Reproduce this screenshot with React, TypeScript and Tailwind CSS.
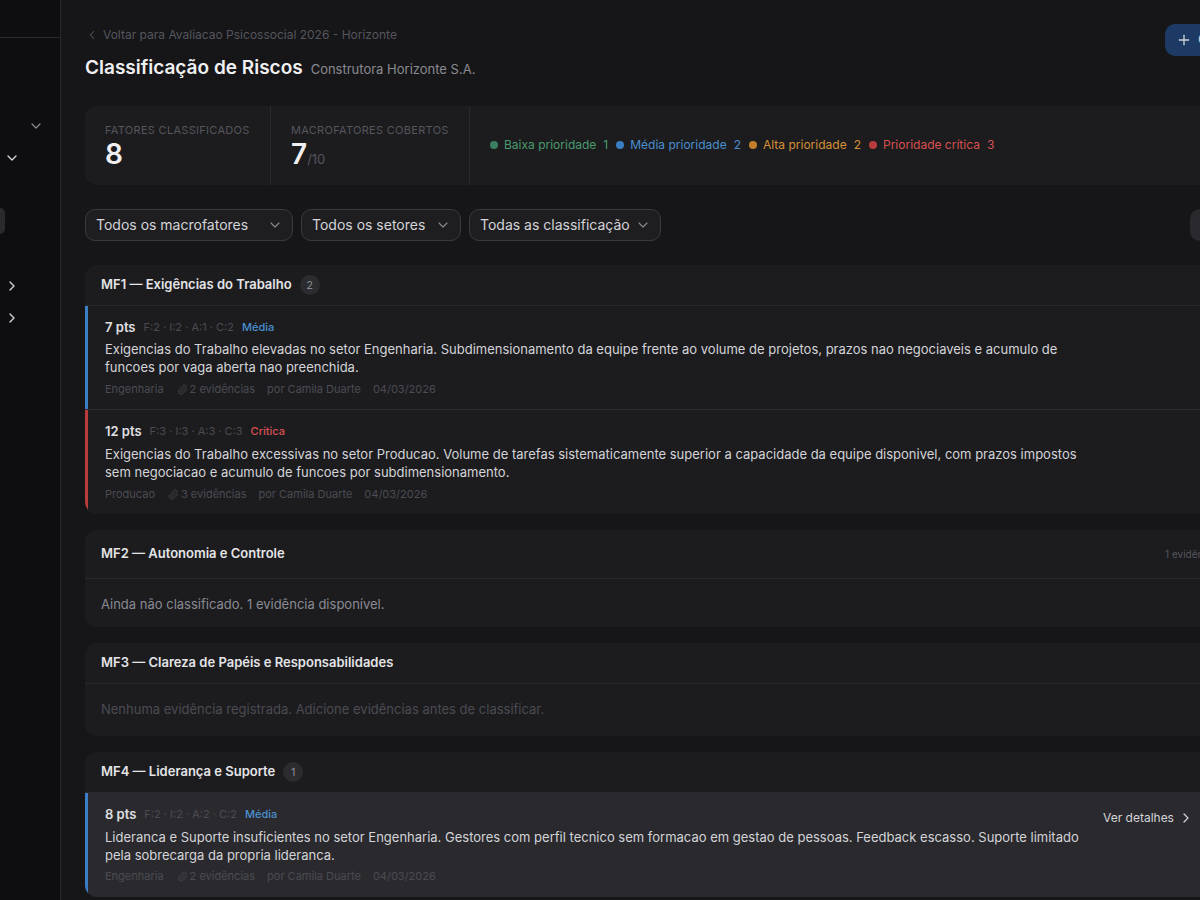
import React from "react";
import { ChevronDown, ChevronLeft, ChevronRight, Paperclip, Plus } from "lucide-react";

type Factor = {
  pts: string;
  scores: string;
  level: "Média" | "Crítica";
  lines: string;
  sector: string;
  evid: string;
  hover?: boolean;
};

const levelText = { "Média": "text-[#4a8fcf]", "Crítica": "text-[#d95050]" };
const levelBar = { "Média": "bg-[#3b7ec4]", "Crítica": "bg-[#b83c3c]" };

function FactorRow({ f, last }: { f: Factor; last?: boolean }) {
  return (
    <div className={`relative flex items-start pl-5 pr-[8px] h-[104px] ${f.hover ? "bg-[#2a2a2e]" : ""} ${last ? "rounded-b-xl overflow-hidden" : "border-b border-[#2c2c30]"}`}>
      <div className={`absolute left-0 top-0 bottom-0 w-[3px] ${levelBar[f.level]}`} />
      <div className="w-[978px] shrink-0 pt-[12px]">
        <div className="flex items-center h-[19px]">
          <span className="text-[13px] font-semibold text-[#e0e0e3] mr-2">{f.pts}</span>
          <span className="text-[11px] text-[#4b4b52] mr-2">{f.scores}</span>
          <span className={`text-[11px] font-medium ${levelText[f.level]}`}>{f.level}</span>
        </div>
        <p className={`text-[13px] leading-[18px] text-[#d4d4d8] ${last ? "mt-[4px]" : "mt-[3px]"}`}>{f.lines}</p>
        <div className={`flex items-center text-[11px] text-[#4b4b52] h-[16px] ${f.hover ? "mt-[4px]" : last ? "mt-[5px]" : "mt-[5px]"}`}>
          <span>{f.sector}</span>
          <Paperclip className="w-[11px] h-[11px] ml-[13px] mr-[2px]" strokeWidth={1.6} />
          <span>{f.evid}</span>
          <span className="ml-[12px]">por Camila Duarte</span>
          <span className="ml-[12px]">04/03/2026</span>
        </div>
      </div>
      {f.hover && (
        <div className="flex items-center ml-[20px] pt-[16px] text-[12px] text-[#d4d4d8] shrink-0">
          Ver detalhes
          <ChevronRight className="w-4 h-4 ml-[4px]" strokeWidth={1.8} />
        </div>
      )}
    </div>
  );
}

function GroupHeader({ title, count, right, tall }: { title: string; count?: string; right?: string; tall?: boolean }) {
  return (
    <div className={`flex items-center pl-4 border-b border-[#2a2a2d] ${tall ? "h-[49px]" : "h-[41px]"}`}>
      <span className="text-[13px] font-semibold text-[#e4e4e7]">{title}</span>
      {count && (
        <span className="ml-2 w-5 h-5 rounded-full bg-[#2c2c30] text-[11px] text-[#8a8a92] flex items-center justify-center">{count}</span>
      )}
      {right && <span className="ml-auto mr-[-31px] text-[10px] text-[#55555c] w-[66px]">{right}</span>}
    </div>
  );
}

function Filter({ label, width }: { label: string; width: string }) {
  return (
    <div className={`flex items-center justify-between h-8 pl-[10px] pr-[9px] rounded-[10px] border border-[#3a3a3f] bg-[#1e1e21] text-[14px] text-[#d4d4d8] ${width}`}>
      <span className="whitespace-nowrap overflow-hidden mb-[1px]">{label}</span>
      <ChevronDown className="w-4 h-4 text-[#8a8a92] shrink-0" strokeWidth={1.6} />
    </div>
  );
}

function Legend({ dot, text, label, n }: { dot: string; text: string; label: string; n: string }) {
  return (
    <div className={`flex items-center text-[12px] ${text}`}>
      <span className={`w-2 h-2 rounded-full mr-[6px] ${dot}`} />
      <span>{label}</span>
      <span className="ml-[7px]">{n}</span>
    </div>
  );
}

export default function App() {
  return (
    <div className="w-[1200px] h-[900px] flex overflow-hidden bg-[#161618]" style={{ fontFamily: "Inter, 'Noto Sans', sans-serif" }}>
      {/* sidebar, scrolled mostly out of view */}
      <aside className="w-[61px] shrink-0 h-full bg-[#0e0e10] border-r border-[#2a2a2d] flex flex-col overflow-hidden text-[#d4d4d8]">
        <div className="h-[38px] border-b border-[#2a2a2d] shrink-0" />
        <div className="flex justify-end pr-[16px] mt-[80px]">
          <ChevronDown className="w-4 h-4 text-[#8a8a92]" strokeWidth={1.8} />
        </div>
        <div className="pl-[4px] mt-[16px]">
          <ChevronDown className="w-4 h-4" strokeWidth={2} />
        </div>
        <div className="w-[5px] h-[26px] rounded-r-md bg-[#2a2a2e] mt-[42px]" />
        <div className="pl-[4px] mt-[44px]">
          <ChevronRight className="w-4 h-4" strokeWidth={2} />
        </div>
        <div className="pl-[4px] mt-[16px]">
          <ChevronRight className="w-4 h-4" strokeWidth={2} />
        </div>
      </aside>

      <main className="w-[1400px] shrink-0 pl-6 pt-[24px]">
        <div className="flex items-start h-[82px]">
          <div className="w-[1080px] shrink-0">
            <div className="flex items-center text-[12px] h-[20px] pt-[1px] text-[#55555c]">
              <ChevronLeft className="w-[14px] h-[14px] mr-[4px]" strokeWidth={1.8} />
              Voltar para Avaliacao Psicossocial 2026 - Horizonte
            </div>
            <div className="flex items-baseline mt-[10px]">
              <h1 className="text-[19px] leading-[28px] font-semibold text-[#f0f0f2]">Classificação de Riscos</h1>
              <span className="ml-2 text-[13px] text-[#8a8a92]">Construtora Horizonte S.A.</span>
            </div>
          </div>
          <div className="h-8 w-[120px] shrink-0 rounded-[10px] bg-[#1c3a63] flex items-center pl-[11px] text-[#d4d4d8] text-[13px]">
            <Plus className="w-4 h-4 mr-[6px]" strokeWidth={2} />
            Classificar
          </div>
        </div>

        <div className="flex h-[79px] rounded-xl bg-[#1c1c1f]">
          <div className="w-[186px] border-r border-[#2a2a2d] pl-5 pt-[18px]">
            <div className="text-[11px] leading-[13px] tracking-[0.3px] text-[#55555c]">FATORES CLASSIFICADOS</div>
            <div className="text-[28px] leading-[30px] font-semibold text-[#f0f0f2] mt-[2px]">8</div>
          </div>
          <div className="w-[199px] border-r border-[#2a2a2d] pl-5 pt-[18px]">
            <div className="text-[11px] leading-[13px] tracking-[0.3px] text-[#55555c]">MACROFATORES COBERTOS</div>
            <div className="mt-[2px] leading-[30px]">
              <span className="text-[28px] font-semibold text-[#f0f0f2]">7</span>
              <span className="text-[13px] text-[#55555c]">/10</span>
            </div>
          </div>
          <div className="flex items-center pl-5 pb-[2px] gap-2">
            <Legend dot="bg-[#3a8060]" text="text-[#4a9a6e]" label="Baixa prioridade" n="1" />
            <Legend dot="bg-[#3b7ec4]" text="text-[#4a8fcf]" label="Média prioridade" n="2" />
            <Legend dot="bg-[#c47f2a]" text="text-[#d68f35]" label="Alta prioridade" n="2" />
            <Legend dot="bg-[#b83c3c]" text="text-[#d95050]" label="Prioridade crítica" n="3" />
          </div>
        </div>

        <div className="flex items-center gap-2 mt-6 mb-6">
          <Filter label="Todos os macrofatores" width="w-[208px]" />
          <Filter label="Todos os setores" width="w-[160px]" />
          <Filter label="Todas as classificação" width="w-[192px]" />
          <div className="ml-[521px] w-[60px] h-8 rounded-[10px] bg-[#2a2a2e]" />
        </div>

        <div className="flex flex-col gap-4">
          <section className="rounded-xl bg-[#1c1c1f]">
            <GroupHeader title="MF1 — Exigências do Trabalho" count="2" />
            <FactorRow
              f={{
                pts: "7 pts",
                scores: "F:2 · I:2 · A:1 · C:2",
                level: "Média",
                lines: "Exigencias do Trabalho elevadas no setor Engenharia. Subdimensionamento da equipe frente ao volume de projetos, prazos nao negociaveis e acumulo de funcoes por vaga aberta nao preenchida.",
                sector: "Engenharia",
                evid: "2 evidências",
              }}
            />
            <FactorRow
              last
              f={{
                pts: "12 pts",
                scores: "F:3 · I:3 · A:3 · C:3",
                level: "Crítica",
                lines: "Exigencias do Trabalho excessivas no setor Producao. Volume de tarefas sistematicamente superior a capacidade da equipe disponivel, com prazos impostos sem negociacao e acumulo de funcoes por subdimensionamento.",
                sector: "Producao",
                evid: "3 evidências",
              }}
            />
          </section>

          <section className="rounded-xl bg-[#1c1c1f] h-[97px]">
            <div className="w-[1115px]">
              <GroupHeader title="MF2 — Autonomia e Controle" right="1 evidência" tall />
            </div>
            <div className="pl-4 pt-[16px] text-[13px] text-[#8a8a92]">Ainda não classificado. 1 evidência disponível.</div>
          </section>

          <section className="rounded-xl bg-[#1c1c1f] h-[93px]">
            <GroupHeader title="MF3 — Clareza de Papéis e Responsabilidades" />
            <div className="pl-4 pt-[16px] text-[13px] text-[#4b4b52]">Nenhuma evidência registrada. Adicione evidências antes de classificar.</div>
          </section>

          <section className="rounded-xl bg-[#1c1c1f]">
            <GroupHeader title="MF4 — Liderança e Suporte" count="1" />
            <FactorRow
              last
              f={{
                pts: "8 pts",
                scores: "F:2 · I:2 · A:2 · C:2",
                level: "Média",
                lines: "Lideranca e Suporte insuficientes no setor Engenharia. Gestores com perfil tecnico sem formacao em gestao de pessoas. Feedback escasso. Suporte limitado pela sobrecarga da propria lideranca.",
                sector: "Engenharia",
                evid: "2 evidências",
                hover: true,
              }}
            />
          </section>
        </div>
      </main>
    </div>
  );
}
